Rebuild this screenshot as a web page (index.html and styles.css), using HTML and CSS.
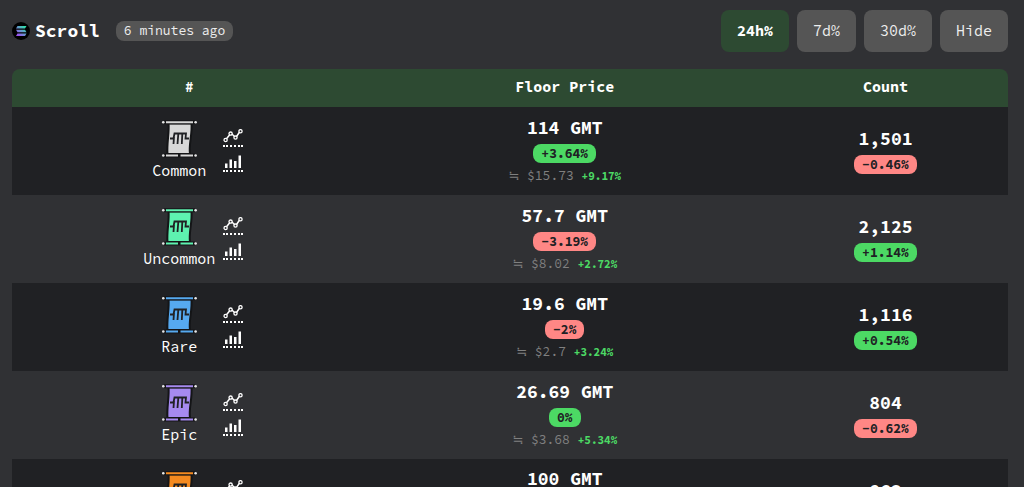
FILE: index.html
```
<!DOCTYPE html>
<html lang="en">
<head>
<meta charset="utf-8">
<title>Scroll</title>
<link rel="stylesheet" href="styles.css">
</head>
<body>
<svg class="defs" width="0" height="0" aria-hidden="true">
  <symbol id="scroll" viewBox="0 0 38 38">
    <path d="M8.500 3.500C9.500 12 6.500 24 7.500 34H30C28.500 25 32.500 14 31.500 3.500Z" fill="currentColor" stroke="#141517" stroke-width="2"/>
    <path d="M4 2.300H35M4 35.500H35" stroke="#141517" stroke-width="4"/>
    <path d="M6 2.300H33M6 35.500H18M20.500 35.500H33" stroke="currentColor" stroke-width="2"/>
    <path d="M10 18.500H13.500L14.500 13.500H26L25.500 18.500H29M14 17L13.500 24M18.300 14L17.500 24M22.300 14L21.800 24" fill="none" stroke="#202124" stroke-width="1.800"/>
    <g fill="#e6e6e6"><circle cx="3.300" cy="2.300" r="1.300"/><circle cx="35.600" cy="2.300" r="1.300"/><circle cx="3.300" cy="35.500" r="1.300"/><circle cx="35.600" cy="35.500" r="1.300"/></g>
  </symbol>
  <symbol id="line" viewBox="0 0 20 16">
    <path d="M3.500 9.800L6.700 5.700M8.900 5L11.500 7.500M13.500 7.500L16.600 3" stroke="#fff" stroke-width="1.500"/>
    <g fill="none" stroke="#fff" stroke-width="1.300"><circle cx="2.600" cy="11" r="1.600"/><circle cx="7.600" cy="4.600" r="1.600"/><circle cx="12.500" cy="8.600" r="1.600"/><circle cx="17.500" cy="2.200" r="1.600"/></g>
  </symbol>
  <symbol id="bars" viewBox="0 0 20 16">
    <path d="M2 9.500H4.500V14H2ZM6.500 5.500H9V14H6.500ZM11 7H13.500V14H11ZM15.500 1.500H18V14H15.500Z" fill="#fff"/>
  </symbol>
</svg>
<header class="bar">
  <svg class="logo" viewBox="0 0 18 18" aria-hidden="true">
    <defs><linearGradient id="sol" x1="0" y1="1" x2="1" y2="0"><stop offset="0.100" stop-color="#a04df5"/><stop offset="0.900" stop-color="#2fe0a8"/></linearGradient></defs>
    <circle cx="9" cy="9" r="9"/>
    <path d="M5.500 4H14.500L13 6.600H4ZM4 7.700H13L14.500 10.300H5.500ZM5.500 11.400H14.500L13 14H4Z" fill="url(#sol)"/>
  </svg>
  <h1 class="title">Scroll</h1>
  <span class="age">6 minutes ago</span>
  <nav class="actions">
    <button class="btn active">24h%</button>
    <button class="btn">7d%</button>
    <button class="btn">30d%</button>
    <button class="btn">Hide</button>
  </nav>
</header>
<table class="prices">
  <thead><tr><th class="col-kind">#</th><th class="col-price">Floor Price</th><th>Count</th></tr></thead>
  <tbody>
    <tr>
      <td><div class="kind"><div class="item"><svg class="scroll common"><use href="#scroll"/></svg><span>Common</span></div><div class="links"><a href="#line-chart" aria-label="Line chart"><svg><use href="#line"/></svg></a><a href="#bar-chart" aria-label="Bar chart"><svg><use href="#bars"/></svg></a></div></div></td>
      <td><div class="stack"><b class="value">114 GMT</b><span class="pill up">+3.64%</span><span class="usd"><span class="approx">≒</span> $15.73 <b class="change">+9.17%</b></span></div></td>
      <td><div class="stack"><b class="value">1,501</b><span class="pill down">-0.46%</span></div></td>
    </tr>
    <tr>
      <td><div class="kind"><div class="item"><svg class="scroll uncommon"><use href="#scroll"/></svg><span>Uncommon</span></div><div class="links"><a href="#line-chart" aria-label="Line chart"><svg><use href="#line"/></svg></a><a href="#bar-chart" aria-label="Bar chart"><svg><use href="#bars"/></svg></a></div></div></td>
      <td><div class="stack"><b class="value">57.7 GMT</b><span class="pill down">-3.19%</span><span class="usd"><span class="approx">≒</span> $8.02 <b class="change">+2.72%</b></span></div></td>
      <td><div class="stack"><b class="value">2,125</b><span class="pill up">+1.14%</span></div></td>
    </tr>
    <tr>
      <td><div class="kind"><div class="item"><svg class="scroll rare"><use href="#scroll"/></svg><span>Rare</span></div><div class="links"><a href="#line-chart" aria-label="Line chart"><svg><use href="#line"/></svg></a><a href="#bar-chart" aria-label="Bar chart"><svg><use href="#bars"/></svg></a></div></div></td>
      <td><div class="stack"><b class="value">19.6 GMT</b><span class="pill down">-2%</span><span class="usd"><span class="approx">≒</span> $2.7 <b class="change">+3.24%</b></span></div></td>
      <td><div class="stack"><b class="value">1,116</b><span class="pill up">+0.54%</span></div></td>
    </tr>
    <tr>
      <td><div class="kind"><div class="item"><svg class="scroll epic"><use href="#scroll"/></svg><span>Epic</span></div><div class="links"><a href="#line-chart" aria-label="Line chart"><svg><use href="#line"/></svg></a><a href="#bar-chart" aria-label="Bar chart"><svg><use href="#bars"/></svg></a></div></div></td>
      <td><div class="stack"><b class="value">26.69 GMT</b><span class="pill up">0%</span><span class="usd"><span class="approx">≒</span> $3.68 <b class="change">+5.34%</b></span></div></td>
      <td><div class="stack"><b class="value">804</b><span class="pill down">-0.62%</span></div></td>
    </tr>
    <tr class="last">
      <td><div class="kind"><div class="item"><svg class="scroll legendary"><use href="#scroll"/></svg></div><div class="links"><a href="#line-chart" aria-label="Line chart"><svg><use href="#line"/></svg></a></div></div></td>
      <td><div class="stack"><b class="value">100 GMT</b></div></td>
      <td class="count"><div class="stack"><b class="value">863</b></div></td>
    </tr>
  </tbody>
</table>
</body>
</html>
```
FILE: styles.css
```
* { box-sizing: border-box; }
body {
  margin: 0;
  padding: 10px 16px 0 12px;
  height: 100vh;
  overflow: hidden;
  background: #303134;
  color: #fff;
  font: 15px/20px "Source Code Pro", "Liberation Mono", monospace;
}
.defs { display: block; }
.bar { display: flex; align-items: center; height: 42px; margin-bottom: 17px; }
.logo { width: 18px; height: 18px; margin-right: 5px; }
.title { margin: 0 16px 0 0; font-size: 18px; }
.age { padding: 0 8px; border-radius: 8px; background: #555; font-size: 13px; color: #eee; }
.actions { display: flex; gap: 8px; margin-left: auto; }
.btn { height: 42px; padding: 0 16px; border: 0; border-radius: 8px; background: #555; color: #eee; font: inherit; }
.btn.active { background: #2d4a32; color: #fff; font-weight: 700; }
.prices { width: 100%; table-layout: fixed; border-spacing: 0; border-radius: 8px 8px 0 0; overflow: hidden; }
th { height: 38px; padding: 0 0 2px; background: #2d4a32; }
.col-kind { width: 35.6%; }
.col-price { width: 39.8%; }
td { height: 88px; padding: 0 0 1px; background: #202124; }
tbody tr:nth-child(even) td { background: #303134; }
.kind { display: grid; grid-template-columns: 72px 20px; gap: 8px; justify-content: center; align-items: center; padding-left: 8px; }
.item { display: flex; flex-direction: column; align-items: center; gap: 3px; }
.scroll { width: 38px; height: 38px; }
.common { color: #d8d8d8; }
.uncommon { color: #5ef2b0; }
.rare { color: #56a9f0; }
.epic { color: #a68af0; }
.legendary { color: #f58a1f; }
.links { display: grid; gap: 7px; }
.links a { display: block; border-bottom: 2px dotted #fff; }
.links svg { display: block; width: 20px; height: 16px; }
.stack { display: flex; flex-direction: column; align-items: center; }
.value { margin-bottom: 4px; font-size: 18px; line-height: 24px; }
.pill { padding: 0 8px; border-radius: 8px; color: #202124; font-size: 13px; line-height: 19px; font-weight: 700; }
.up { background: #4cd964; }
.down { background: #ff8785; }
.usd { margin-top: 3px; color: #808080; font-size: 13px; line-height: 20px; }
.approx { font-family: "DejaVu Sans", sans-serif; line-height: 1; }
.change { color: #4cd964; font-size: 11px; }
.last td { padding-top: 8px; vertical-align: top; }
.last .count { padding-top: 20px; }
.last .kind { align-items: start; }
.last .item { padding-top: 4px; }
.last .links { padding-top: 13px; }
```
